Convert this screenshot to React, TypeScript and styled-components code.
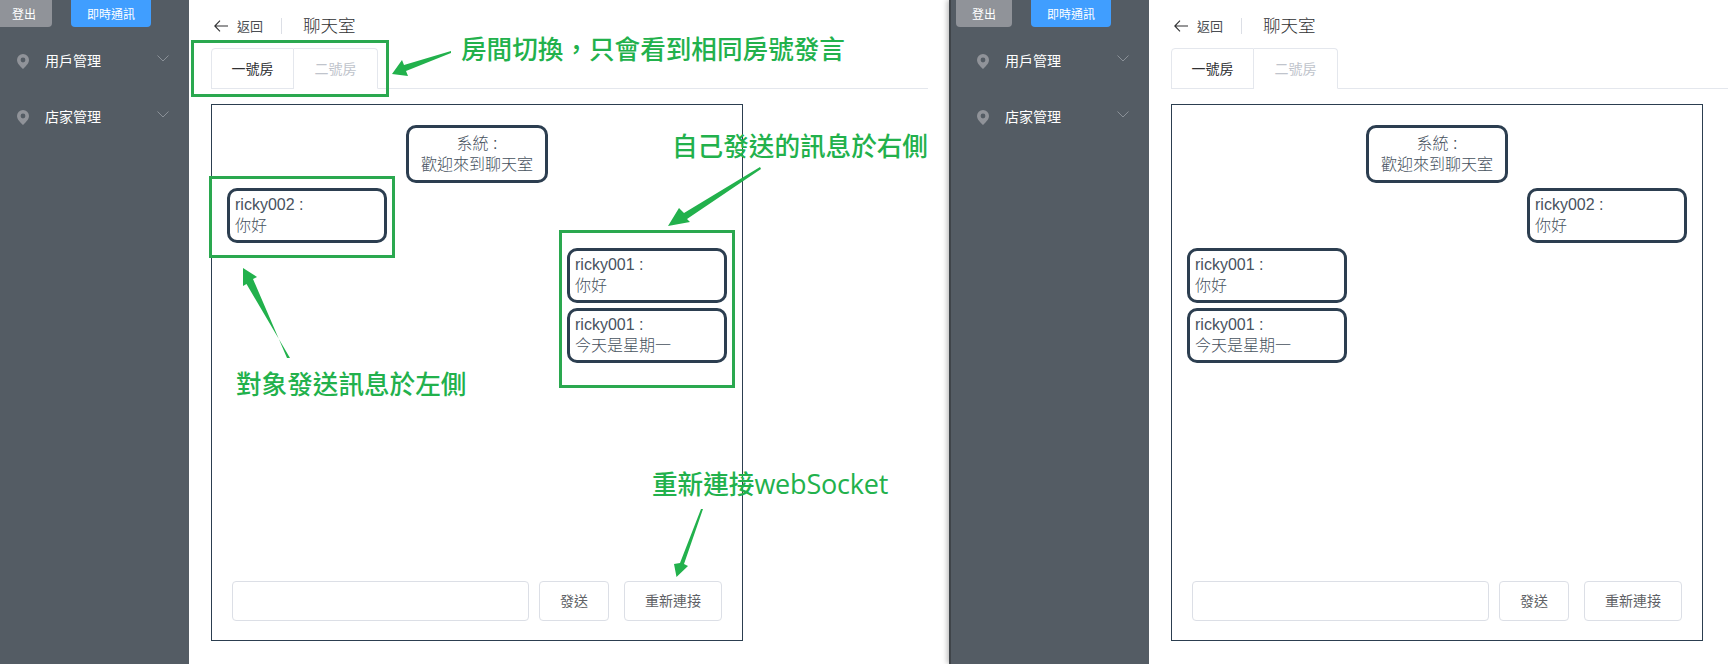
import React from "react";
import styled, { createGlobalStyle } from "styled-components";

const Global = createGlobalStyle`
  html, body { margin: 0; padding: 0; background: #fff; }
  body { font-family: "Liberation Sans", "Noto Sans CJK TC", sans-serif; overflow: hidden; }
  * { box-sizing: border-box; }
`;

const Page = styled.div`
  position: relative;
  display: flex;
  width: 1728px;
  height: 664px;
  overflow: hidden;
`;

const Screen = styled.section<{ $width: number; $raised?: boolean }>`
  display: flex;
  flex: none;
  width: ${(p) => p.$width}px;
  height: 664px;
  position: relative;
  z-index: ${(p) => (p.$raised ? 1 : 0)};
  box-shadow: ${(p) => (p.$raised ? "-2px 0 5px rgba(0,0,0,.25)" : "none")};
`;

const Sidebar = styled.aside<{ $width: number; $band?: boolean }>`
  flex: none;
  width: ${(p) => p.$width}px;
  height: 100%;
  overflow: hidden;
  background: #545c64;
  box-shadow: ${(p) => (p.$band ? "inset 2px 0 0 #3f4449" : "none")};
`;

const SidebarInner = styled.div<{ $shift: number }>`
  width: 199px;
  margin-left: ${(p) => p.$shift}px;
`;

const TopButtons = styled.div`
  display: flex;
  gap: 19px;
  padding-left: 6px;
  height: 33px;
`;

const TopButton = styled.button<{ $color: string; $width: number }>`
  width: ${(p) => p.$width}px;
  height: 27px;
  padding: 0 0 1px;
  border: 0;
  border-radius: 0 0 4px 4px;
  background: ${(p) => p.$color};
  color: #fff;
  font: 12px "Liberation Sans", "Noto Sans CJK TC", sans-serif;
`;

const NavRow = styled.div`
  display: flex;
  align-items: center;
  height: 56px;
  padding-left: 27px;
  padding-right: 20px;
  color: #fff;
  font-size: 14px;
`;

const NavLabel = styled.span`
  flex: 1;
  margin-left: 16px;
  margin-top: -2px;
`;

const Main = styled.main`
  flex: 1;
  min-width: 0;
  overflow: hidden;
  background: #fff;
  padding: 18px 0 0 22px;
`;

const Content = styled.div`
  width: 717px;
`;

const PageHeader = styled.header`
  display: flex;
  align-items: center;
  height: 16px;
  margin-bottom: 14px;
`;

const Back = styled.div`
  display: flex;
  align-items: center;
  gap: 9px;
  width: 71px;
  padding-left: 3px;
  height: 16px;
  border-right: 1px solid #dcdfe6;
  color: #4a4d52;
  font-size: 13px;
`;

const BackLabel = styled.span`
  margin-top: -2px;
`;

const PageTitle = styled.h1`
  margin: -4px 0 0 21px;
  font-size: 17.5px;
  font-weight: 300;
  color: #303133;
`;

const TabBar = styled.div`
  display: flex;
  height: 41px;
  border-bottom: 1px solid #e4e7ed;
`;

const Tab = styled.div<{ $active?: boolean }>`
  width: ${(p) => (p.$active ? 83 : 84)}px;
  height: 41px;
  padding-bottom: 2px;
  display: flex;
  align-items: center;
  justify-content: center;
  font-size: 14px;
  border: 1px solid #e4e7ed;
  border-left: ${(p) => (p.$active ? "1px solid #e4e7ed" : "0")};
  border-radius: ${(p) => (p.$active ? "4px 0 0 0" : "0 4px 0 0")};
  border-bottom: ${(p) => (p.$active ? "1px solid #e4e7ed" : "1px solid #fff")};
  color: ${(p) => (p.$active ? "#303133" : "#c0c4cc")};
`;

const ChatBox = styled.div`
  display: flex;
  flex-direction: column;
  width: 532px;
  height: 537px;
  margin-top: 15px;
  padding: 20px 15px 19px 15px;
  border: 1px solid #2c3e50;
`;

const Messages = styled.div`
  flex: 1;
  display: flex;
  flex-direction: column;
  gap: 5px;
`;

const Bubble = styled.div<{ $side: "left" | "right" | "center" }>`
  width: ${(p) => (p.$side === "center" ? 142 : 160)}px;
  padding: ${(p) => (p.$side === "center" ? "5px 5px 5px" : "3px 5px 4px")};
  border: 3px solid #2c3e50;
  border-radius: 10px;
  color: #47525e;
  font-size: 16px;
  font-weight: 300;
  line-height: 21px;
  text-align: ${(p) => (p.$side === "center" ? "center" : "left")};
  align-self: ${(p) =>
    p.$side === "left" ? "flex-start" : p.$side === "right" ? "flex-end" : "center"};
`;

const Line = styled.div`
  white-space: nowrap;
`;

const InputRow = styled.div`
  display: flex;
  height: 40px;
  padding: 0 5px 0 5px;
`;

const TextField = styled.input`
  flex: none;
  width: 297px;
  height: 40px;
  margin-right: 10px;
  border: 1px solid #dcdfe6;
  border-radius: 4px;
  outline: none;
`;

const ActionButton = styled.button<{ $width: number; $gap?: number }>`
  flex: none;
  width: ${(p) => p.$width}px;
  height: 40px;
  padding: 0 0 2px;
  margin-right: ${(p) => p.$gap ?? 0}px;
  background: #fff;
  border: 1px solid #dcdfe6;
  border-radius: 4px;
  color: #606266;
  white-space: nowrap;
  font: 14px "Liberation Sans", "Noto Sans CJK TC", sans-serif;
`;

const Note = styled.div<{ $x: number; $y: number }>`
  position: absolute;
  z-index: 3;
  left: ${(p) => p.$x}px;
  top: ${(p) => p.$y}px;
  height: 32px;
  line-height: 32px;
  white-space: nowrap;
  color: #22b14c;
  font-family: "Noto Sans CJK TC", sans-serif;
  font-size: 25.6px;
  font-weight: 500;
`;

const NoteLatin = styled.span`
  font-family: "Open Sans", sans-serif;
  font-weight: 400;
  font-size: 27px;
  letter-spacing: -0.2px;
`;

const Frame = styled.div<{ $x: number; $y: number; $w: number; $h: number }>`
  position: absolute;
  z-index: 3;
  left: ${(p) => p.$x}px;
  top: ${(p) => p.$y}px;
  width: ${(p) => p.$w}px;
  height: ${(p) => p.$h}px;
  border: 3px solid #2aa84f;
`;

const ArrowLayer = styled.svg`
  position: absolute;
  z-index: 3;
  left: 0;
  top: 0;
  pointer-events: none;
`;

const Pin = () => (
  <svg width="12" height="15" viewBox="0 0 12 15">
    <path
      fill="#909399"
      fillRule="evenodd"
      d="M6 0a6 6 0 0 1 6 6c0 3.6-4 7-6 9-2-2-6-5.4-6-9a6 6 0 0 1 6-6zm0 3.6a2.4 2.4 0 1 0 0 4.8 2.4 2.4 0 0 0 0-4.8z"
    />
  </svg>
);

const Chevron = () => (
  <svg width="12" height="7" viewBox="0 0 12 7" style={{ marginTop: -5 }}>
    <path d="M.5.5 6 6 11.5.5" fill="none" stroke="#8a9097" strokeWidth="1" />
  </svg>
);

const BackArrow = () => (
  <svg width="14" height="12" viewBox="0 0 14 12">
    <path d="M6 .7.8 6 6 11.3M.8 6H14" fill="none" stroke="#303133" strokeWidth="1.1" />
  </svg>
);

type Msg = { side: "left" | "right" | "center"; who: string; text: string };

const ChatScreen = ({
  width,
  side,
  shift,
  band,
  messages,
}: {
  width: number;
  side: number;
  shift: number;
  band?: boolean;
  messages: Msg[];
}) => (
  <Screen $width={width} $raised={band}>
    <Sidebar $width={side} $band={band}>
      <SidebarInner $shift={shift}>
        <TopButtons>
          <TopButton $color="#909399" $width={56}>登出</TopButton>
          <TopButton $color="#409eff" $width={80}>即時通訊</TopButton>
        </TopButtons>
        {["用戶管理", "店家管理"].map((label) => (
          <NavRow key={label}>
            <Pin />
            <NavLabel>{label}</NavLabel>
            <Chevron />
          </NavRow>
        ))}
      </SidebarInner>
    </Sidebar>
    <Main>
      <Content>
        <PageHeader>
          <Back>
            <BackArrow />
            <BackLabel>返回</BackLabel>
          </Back>
          <PageTitle>聊天室</PageTitle>
        </PageHeader>
        <TabBar>
          <Tab $active>一號房</Tab>
          <Tab>二號房</Tab>
        </TabBar>
        <ChatBox>
          <Messages>
            {messages.map((m, i) => (
              <Bubble key={i} $side={m.side}>
                <Line>{m.who} :</Line>
                <Line>{m.text}</Line>
              </Bubble>
            ))}
          </Messages>
          <InputRow>
            <TextField />
            <ActionButton $width={70} $gap={15}>發送</ActionButton>
            <ActionButton $width={98}>重新連接</ActionButton>
          </InputRow>
        </ChatBox>
      </Content>
    </Main>
  </Screen>
);

const leftMessages: Msg[] = [
  { side: "center", who: "系統", text: "歡迎來到聊天室" },
  { side: "left", who: "ricky002", text: "你好" },
  { side: "right", who: "ricky001", text: "你好" },
  { side: "right", who: "ricky001", text: "今天是星期一" },
];

const rightMessages: Msg[] = [
  { side: "center", who: "系統", text: "歡迎來到聊天室" },
  { side: "right", who: "ricky002", text: "你好" },
  { side: "left", who: "ricky001", text: "你好" },
  { side: "left", who: "ricky001", text: "今天是星期一" },
];

export default function App() {
  return (
    <>
      <Global />
      <Page>
        <ChatScreen width={949} side={189} shift={-10} messages={leftMessages} />
        <ChatScreen width={779} side={200} shift={1} band messages={rightMessages} />

        <Frame $x={191} $y={40} $w={198} $h={57} />
        <Frame $x={209} $y={176} $w={186} $h={82} />
        <Frame $x={559} $y={230} $w={176} $h={158} />

        <Note $x={461} $y={32}>房間切換，只會看到相同房號發言</Note>
        <Note $x={672} $y={129}>自己發送的訊息於右側</Note>
        <Note $x={236} $y={367}>對象發送訊息於左側</Note>
        <Note $x={652} $y={467}>重新連接<NoteLatin>webSocket</NoteLatin></Note>

        <ArrowLayer width="1728" height="664" viewBox="0 0 1728 664">
          <g fill="#22b14c">
            <path d="M451 51 404 65 402 60 392 74 408 76 406 71 451 53z" />
            <path d="M760 167 684 213 679 208 668 226 690 222 687 219 761 169z" />
            <path d="M287 358 253 279 257 277 243 268 243 286 246.5 284 290 358z" />
            <path d="M701 509 680 563 674 564 676.5 577 688 566 684 564 703 509z" />
          </g>
        </ArrowLayer>
      </Page>
    </>
  );
}
